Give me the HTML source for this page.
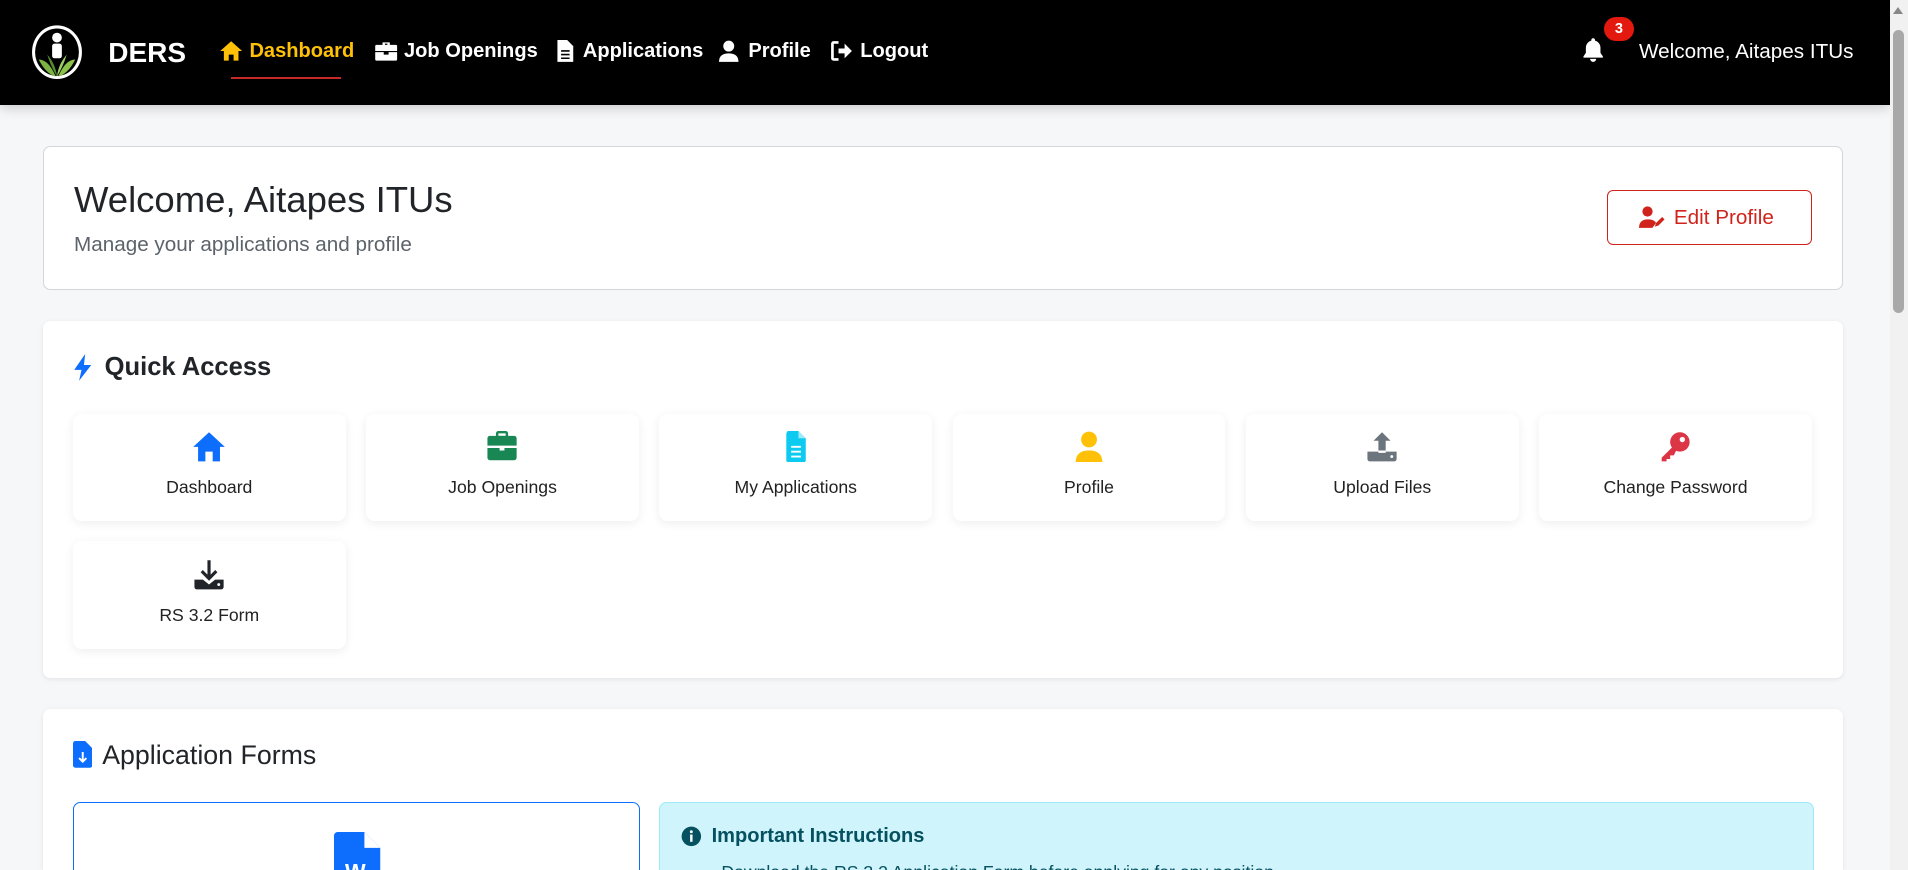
<!DOCTYPE html>
<html><head><meta charset="utf-8"><style>
html,body{margin:0;padding:0;overflow:hidden;}
body{width:1908px;height:870px;background:#f6f7f9;font-family:"Liberation Sans",sans-serif;}
#w{zoom:1.2168;width:1568px;height:715px;position:relative;overflow:hidden;background:#f6f7f9;}
.abs{position:absolute;}
.nav{left:0;top:0;width:1553px;height:86px;background:#000;box-shadow:0 2px 10px rgba(0,0,0,.2);}
.ni{position:absolute;top:33px;color:#fff;font-size:16.5px;font-weight:bold;white-space:nowrap;}
.ni svg{position:absolute;left:-25px;top:0;}
.card{position:absolute;background:#fff;border-radius:6px;}
.tile{position:absolute;width:224px;height:88px;background:#fff;border-radius:7px;box-shadow:0 2px 8px rgba(0,0,0,.07);text-align:center;}
.tile .lb{position:absolute;left:0;right:0;top:52px;font-size:14.5px;color:#222;}
.tile svg{position:absolute;left:98px;top:14px;}
.sb{left:1553px;top:0;width:15px;height:715px;background:#f1f1f1;}
</style></head><body><div id="w">
<div class="abs nav">
 <svg class="abs" style="left:24px;top:19px" width="46" height="48" viewBox="0 0 46 48"><ellipse cx="23" cy="24" rx="21" ry="22.5" fill="#fff" stroke="#000" stroke-width="1"/><ellipse cx="23" cy="24" rx="18" ry="19.5" fill="#000"/><circle cx="23" cy="12" r="4" fill="#fff"/><rect x="19" y="17" width="8" height="12" rx="2" fill="#fff"/><path d="M8 30 Q16 30 22 44 Q14 42 8 30Z" fill="#7cb342"/><path d="M38 30 Q30 30 24 44 Q32 42 38 30Z" fill="#8bc34a"/><path d="M15 26 Q22 34 23 44 Q18 36 15 26Z" fill="#558b2f"/><path d="M31 26 Q24 34 23 44 Q28 36 31 26Z" fill="#9ccc65"/></svg>
 <div class="abs" style="left:89px;top:30px;color:#fff;font-size:23px;font-weight:bold">DERS</div>
 <div class="ni" style="left:205px;color:#ffc107"><svg width="20" height="18" viewBox="0 0 20 18"><path d="M10 1 L19 9 H16 V17 H12 V12 H8 V17 H4 V9 H1Z" fill="#ffc107"/></svg>Dashboard</div>
 <div class="abs" style="left:190px;top:63px;width:90px;height:2px;background:#c62828"></div>
 <div class="ni" style="left:332px"><svg width="20" height="18" viewBox="0 0 20 18"><path d="M7 2h6v2h5a1 1 0 011 1v4H1V5a1 1 0 011-1h5zM9 4h2V3H9z M1 10h7v2h4v-2h7v6a1 1 0 01-1 1H2a1 1 0 01-1-1z" fill="#fff"/></svg>Job Openings</div>
 <div class="ni" style="left:479px"><svg width="20" height="18" viewBox="0 0 20 18" style="left:-23px"><path d="M2 0h8l5 5v13H2z" fill="#fff"/><path d="M5 9h7M5 12h7M5 15h7" stroke="#000" stroke-width="1.3"/></svg>Applications</div>
 <div class="ni" style="left:615px"><svg width="20" height="18" viewBox="0 0 20 18" style="left:-24px"><circle cx="8" cy="5" r="4.5" fill="#fff"/><path d="M0 18c0-5 3-7 8-7s8 2 8 7z" fill="#fff"/></svg>Profile</div>
 <div class="ni" style="left:707px"><svg width="20" height="18" viewBox="0 0 20 18"><path d="M7 2H3a1 1 0 00-1 1v12a1 1 0 001 1h4" stroke="#fff" stroke-width="2.2" fill="none"/><path d="M7 7h5V3l6 6-6 6v-4H7z" fill="#fff"/></svg>Logout</div>
 <svg class="abs" style="left:1299px;top:30px" width="20" height="22" viewBox="0 0 20 22"><path d="M10 1a1.5 1.5 0 011.5 1.5v.5A6 6 0 0116 9v4l2 3v1H2v-1l2-3V9a6 6 0 014.5-6v-.5A1.5 1.5 0 0110 1z M7.5 18h5a2.5 2.5 0 01-5 0z" fill="#fff"/></svg>
 <div class="abs" style="left:1318px;top:14px;width:25px;height:20px;border-radius:10px;background:#e3190f;color:#fff;font-size:12px;font-weight:bold;text-align:center;line-height:20px">3</div>
 <div class="abs" style="left:1347px;top:33px;color:#fff;font-size:17px;">Welcome, Aitapes ITUs</div>
</div>
<div class="abs sb"><div class="abs" style="left:3px;top:25px;width:9px;height:232px;background:#a8a8a8;border-radius:5px"></div><div class="abs" style="left:3px;top:6px;width:0;height:0;border-left:4.5px solid transparent;border-right:4.5px solid transparent;border-bottom:6px solid #888"></div></div>

<div class="card" style="left:35px;top:120px;width:1478px;height:117px;border:1px solid #d4d6d9">
 <div class="abs" style="left:25px;top:26px;font-size:30px;color:#212529">Welcome, Aitapes ITUs</div>
 <div class="abs" style="left:25px;top:71px;font-size:17px;color:#5c636a">Manage your applications and profile</div>
 <div class="abs" style="left:1285px;top:35px;width:167px;height:44px;border:1px solid #d0231b;border-radius:5px;color:#d0231b;font-size:17px">
  <svg class="abs" style="left:25px;top:13px" width="22" height="18" viewBox="0 0 22 18"><circle cx="7" cy="4.5" r="4.2" fill="#d0231b"/><path d="M0 18c0-5 3-7 7-7s6 1 7 3l-3 4z" fill="#d0231b"/><path d="M13 17l1-3 5-5 2 2-5 5z" fill="#d0231b"/></svg>
  <span class="abs" style="left:54px;top:13px">Edit Profile</span></div>
</div>

<div class="card" style="left:35px;top:264px;width:1480px;height:293px;box-shadow:0 1px 4px rgba(0,0,0,.08)">
 <svg class="abs" style="left:25px;top:27px" width="16" height="22" viewBox="0 0 16 22"><path d="M10 0L1 13h6l-2 9 10-13H9z" fill="#0d6efd"/></svg>
 <div class="abs" style="left:51px;top:26px;font-size:21px;font-weight:bold;color:#212529">Quick Access</div>
 <div class="tile" style="left:25px;top:76px"><svg width="28" height="26" viewBox="0 0 28 26"><path d="M14 1l13 12h-4v12h-6v-8h-6v8H5V13H1z" fill="#0d6efd"/></svg><div class="lb">Dashboard</div></div>
 <div class="tile" style="left:266px;top:76px"><svg width="28" height="26" viewBox="0 0 28 26"><path d="M4 4h20a2 2 0 012 2v6H2V6a2 2 0 012-2z M2 14h10v2h4v-2h10v8a2 2 0 01-2 2H4a2 2 0 01-2-2z" fill="#198754"/><rect x="10" y="1" width="8" height="4" rx="1" fill="none" stroke="#198754" stroke-width="2"/></svg><div class="lb">Job Openings</div></div>
 <div class="tile" style="left:507px;top:76px"><svg width="28" height="26" viewBox="0 0 28 26"><path d="M7 0h9l6 6v18a2 2 0 01-2 2H8a2 2 0 01-2-2V2z" fill="#0dcaf0"/><path d="M16 0v6h6" fill="#fff" opacity=".6"/><path d="M10 13h8M10 17h8M10 21h8" stroke="#fff" stroke-width="1.6"/></svg><div class="lb">My Applications</div></div>
 <div class="tile" style="left:748px;top:76px"><svg width="28" height="26" viewBox="0 0 28 26"><circle cx="14" cy="7" r="6.5" fill="#ffc107"/><path d="M3 26c0-7 4-10 11-10s11 3 11 10z" fill="#ffc107"/></svg><div class="lb">Profile</div></div>
 <div class="tile" style="left:989px;top:76px"><svg width="28" height="26" viewBox="0 0 28 26"><path d="M14 1l7 7h-4v8h-6V8H7z" fill="#6c757d"/><path d="M2 17h9v1h6v-1h9v6a2 2 0 01-2 2H4a2 2 0 01-2-2z" fill="#6c757d"/><circle cx="22" cy="21" r="1.2" fill="#fff"/></svg><div class="lb">Upload Files</div></div>
 <div class="tile" style="left:1230px;top:76px"><svg width="28" height="26" viewBox="0 0 28 26"><circle cx="18" cy="9" r="8" fill="#dc3545"/><circle cx="20" cy="7" r="2.2" fill="#fff"/><path d="M12 13L3 22v3h4v-2h3v-3h3l2-4z" fill="#dc3545"/></svg><div class="lb">Change Password</div></div>
 <div class="tile" style="left:25px;top:181px"><svg width="28" height="26" viewBox="0 0 28 26"><path d="M14 1v14M8 10l6 6 6-6" stroke="#212529" stroke-width="2.6" fill="none"/><path d="M2 17h7l5 4 5-4h7v6a2 2 0 01-2 2H4a2 2 0 01-2-2z" fill="#212529"/><circle cx="22" cy="21" r="1.2" fill="#fff"/></svg><div class="lb">RS 3.2 Form</div></div>
</div>

<div class="card" style="left:35px;top:583px;width:1480px;height:132px;border-radius:6px 6px 0 0;box-shadow:0 1px 4px rgba(0,0,0,.08);overflow:hidden">
 <svg class="abs" style="left:25px;top:26px" width="16" height="22" viewBox="0 0 16 22"><path d="M2 0h8l6 6v14a2 2 0 01-2 2H2a2 2 0 01-2-2V2a2 2 0 012-2z" fill="#0d6efd"/><path d="M8 9v8M5 14l3 3 3-3" stroke="#fff" stroke-width="1.6" fill="none"/></svg>
 <div class="abs" style="left:49px;top:25px;font-size:22px;color:#212529">Application Forms</div>
 <div class="abs" style="left:25px;top:76px;width:464px;height:80px;border:1px solid #0d6efd;border-radius:6px;background:#fff">
  <svg class="abs" style="left:214px;top:24px" width="38" height="40" viewBox="0 0 38 40"><path d="M3 0h22l13 13v27H0V3a3 3 0 013-3z" fill="#0d6efd"/><path d="M25 0v13h13" fill="#fff"/><text x="9" y="39" font-family="Liberation Sans" font-weight="bold" font-size="18" fill="#fff">W</text></svg>
 </div>
 <div class="abs" style="left:507px;top:76px;width:947px;height:80px;border:1px solid #9eeaf9;border-radius:6px;background:#cff4fc">
  <svg class="abs" style="left:17px;top:19px" width="17" height="17" viewBox="0 0 17 17"><circle cx="8.5" cy="8.5" r="8" fill="#055160"/><rect x="7.5" y="7" width="2" height="6" fill="#fff"/><circle cx="8.5" cy="4.7" r="1.2" fill="#fff"/></svg>
  <div class="abs" style="left:42px;top:18px;font-size:16.5px;font-weight:bold;color:#055160">Important Instructions</div>
  <div class="abs" style="left:50px;top:49px;font-size:14.5px;color:#055160">Download the RS 3.2 Application Form before applying for any position.</div>
 </div>
</div>
</div></body></html>
